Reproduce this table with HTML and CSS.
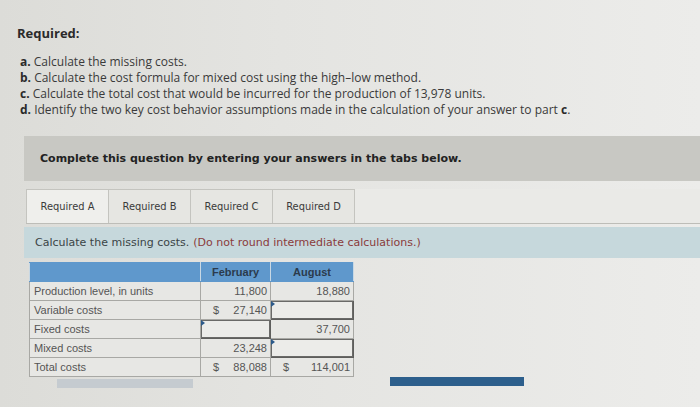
FILE: index.html
```html
<!DOCTYPE html>
<html>
<head>
<meta charset="utf-8">
<link rel="stylesheet" href="styles.css">
</head>
<body>
<div class="page">
  <div class="req">
    <h2 class="req-title">Required:</h2>
    <ol class="req-list">
      <li><b>a.</b> Calculate the missing costs.</li>
      <li><b>b.</b> Calculate the cost formula for mixed cost using the high–low method.</li>
      <li><b>c.</b> Calculate the total cost that would be incurred for the production of 13,978 units.</li>
      <li><b>d.</b> Identify the two key cost behavior assumptions made in the calculation of your answer to part <b>c</b>.</li>
    </ol>
  </div>

  <div class="question">Complete this question by entering your answers in the tabs below.</div>

  <div class="tabbar">
    <div class="tab active">Required A</div>
    <div class="tab">Required B</div>
    <div class="tab">Required C</div>
    <div class="tab">Required D</div>
  </div>

  <div class="instruction">Calculate the missing costs. <span class="note">(Do not round intermediate calculations.)</span></div>

  <table class="grid">
    <colgroup>
      <col class="c-lbl">
      <col class="c-feb">
      <col class="c-aug">
    </colgroup>
    <tr class="head">
      <th></th>
      <th>February</th>
      <th>August</th>
    </tr>
    <tr>
      <td class="lbl">Production level, in units</td>
      <td class="num"><span class="val">11,800</span></td>
      <td class="num"><span class="val">18,880</span></td>
    </tr>
    <tr>
      <td class="lbl">Variable costs</td>
      <td class="num"><span class="cur">$</span><span class="val">27,140</span></td>
      <td class="num input"><span class="mark"></span></td>
    </tr>
    <tr>
      <td class="lbl">Fixed costs</td>
      <td class="num input"><span class="mark"></span></td>
      <td class="num"><span class="val">37,700</span></td>
    </tr>
    <tr>
      <td class="lbl">Mixed costs</td>
      <td class="num"><span class="val">23,248</span></td>
      <td class="num input"><span class="mark"></span></td>
    </tr>
    <tr>
      <td class="lbl">Total costs</td>
      <td class="num"><span class="cur">$</span><span class="val">88,088</span></td>
      <td class="num"><span class="cur">$</span><span class="val">114,001</span></td>
    </tr>
  </table>

  <div class="bars">
    <div class="bar grey"></div>
    <div class="bar blue"></div>
  </div>
</div>
</body>
</html>
```

FILE: styles.css
```css
html, body {
  margin: 0;
  padding: 0;
}
body {
  width: 700px;
  height: 407px;
  overflow: hidden;
  background: linear-gradient(90deg, #dcdcd8 0%, #e4e4e1 40%, #ececea 100%);
  font-family: "Open Sans", "Lato", sans-serif;
  color: #333;
}
.page {
  padding-top: 24px;
}
.req {
  padding-left: 17px;
}
.req-title {
  margin: 0;
  font-size: 13px;
  font-weight: 700;
  line-height: 18px;
  color: #2a2a2a;
}
.req-list {
  list-style: none;
  margin: 12px 0 0 0;
  padding: 0 0 0 3px;
  font-size: 12px;
  line-height: 16px;
  color: #3a3a3a;
}
.req-list b {
  font-weight: 700;
  color: #2a2a2a;
}
.question {
  margin: 18px 0 0 24px;
  height: 45px;
  display: flex;
  align-items: center;
  padding-left: 16px;
  background: #c8c8c3;
  font-family: "DejaVu Sans", Verdana, sans-serif;
  font-weight: 700;
  font-size: 11px;
  color: #222;
}
.tabbar {
  margin: 8px 0 0 26px;
  display: flex;
  background: #eaeae7;
  border-bottom: 1px solid #bdbdb8;
  height: 34px;
}
.tab {
  width: 81px;
  display: flex;
  align-items: center;
  justify-content: center;
  border: 1px solid #c4c4bf;
  border-bottom: none;
  margin-right: -1px;
  background: #e6e6e2;
  font-family: "DejaVu Sans", Verdana, sans-serif;
  font-size: 9.9px;
  color: #3a3a3a;
}
.tab.active {
  background: #efefec;
}
.instruction {
  margin: 3px 0 0 24px;
  height: 31px;
  display: flex;
  align-items: center;
  padding-left: 11px;
  background: #c6d8dc;
  font-family: "DejaVu Sans", Verdana, sans-serif;
  font-size: 11px;
  color: #3a4446;
}
.instruction .note {
  margin-left: 4px;
  color: #8a3b3b;
}
.grid {
  margin: 4px 0 0 29px;
  width: 324px;
  table-layout: fixed;
  border-collapse: collapse;
  font-family: "Liberation Sans", Arial, sans-serif;
  font-size: 11px;
  color: #555;
  background: #e7e7e4;
}
.grid col.c-lbl { width: 171px; }
.grid col.c-feb { width: 70px; }
.grid col.c-aug { width: 83px; }
.grid th, .grid td {
  height: 19px;
  padding: 0;
  border: 1px solid #a8a8a4;
  box-sizing: border-box;
}
.grid .head th {
  background: #5f98cc;
  color: #2b3b4d;
  font-weight: 700;
  font-size: 11px;
  border-color: #5f98cc #c8d8e4 #5f98cc #c8d8e4;
}
.grid td.lbl {
  padding-left: 4px;
}
.grid td.num {
  position: relative;
  padding-right: 3px;
}
.grid td.num .cur {
  float: left;
  padding-left: 12px;
}
.grid td.num .val {
  float: right;
}
.grid td.input {
  border: 1px solid #5e5e5c;
  box-shadow: inset 0 0 0 1px #6a6a68;
  background: #ecece9;
}
.grid td.input .mark {
  position: absolute;
  left: 0;
  top: 0;
  width: 0;
  height: 0;
  border-top: 3px solid transparent;
  border-bottom: 3px solid transparent;
  border-left: 4px solid #2c5a8a;
}
.bars {
  display: flex;
  align-items: flex-start;
  margin-top: 0;
}
.bar.grey {
  margin-left: 57px;
  margin-top: 2px;
  width: 136px;
  height: 9px;
  background: #c5cbd0;
}
.bar.blue {
  margin-left: 197px;
  width: 134px;
  height: 9px;
  background: #2d5f8c;
}
```
